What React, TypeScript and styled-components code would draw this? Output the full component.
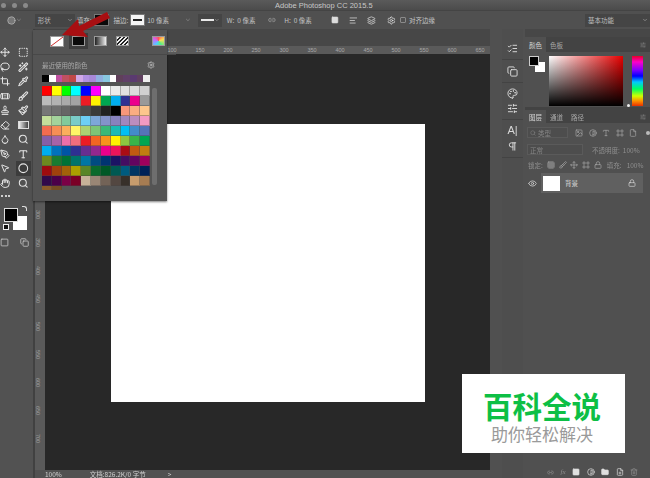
import React from "react";
import styled, { createGlobalStyle } from "styled-components";
import {
  Move, SquareDashed, Lasso, Wand2, Crop, Pipette, Bandage, Brush, Stamp, Paintbrush, Eraser,
  Droplet, Search, PenTool, Type, MousePointer2, Circle, Hand, Settings, ChevronDown, Link2,
  Square, AlignLeft, Layers, ListChecks, Copy, SlidersHorizontal, Image, Contrast, File, Lock,
  Grid3x3, Frame, Eye, Folder, FilePlus, Trash2, Pilcrow, Palette,
} from "lucide-react";

const Global = createGlobalStyle`
  html, body { margin: 0; padding: 0; background: #505050; overflow: hidden; }
  * { box-sizing: border-box; }
`;

const cjk = `"Noto Sans CJK SC", "Liberation Sans", sans-serif`;

const Stage = styled.div`
  position: relative;
  width: 650px;
  height: 478px;
  overflow: hidden;
  font-family: ${cjk};
  font-size: 6.5px;
  color: #c4c4c4;
`;
const Soft = styled.div`
  width: 650px;
  height: 478px;
  display: flex;
  flex-direction: column;
  filter: blur(0.55px);
`;
const TitleBar = styled.div`
  height: 10px;
  background: linear-gradient(#5a5a5a, #4b4b4b);
  display: flex;
  align-items: center;
  padding-left: 1px;
  padding-top: 1px;
`;
const WinDot = styled.span`
  width: 5px;
  height: 5px;
  border-radius: 50%;
  background: #8a8a8a;
`;
const WinDots = styled.div`
  display: flex;
  gap: 6px;
  width: 274px;
`;
const Title = styled.span`
  font-family: "Liberation Sans", sans-serif;
  font-size: 7.5px;
  color: #c8c8c8;
`;
const OptionsBar = styled.div`
  height: 19px;
  background: #505050;
  border-top: 1px solid #444;
  display: flex;
  align-items: center;
  padding-left: 7px;
  white-space: nowrap;
`;
const Gap = styled.span<{ $w: number }>`
  display: inline-block;
  flex: none;
  width: ${(p) => p.$w}px;
`;
const SelectBox = styled.div<{ $w: number }>`
  width: ${(p) => p.$w}px;
  height: 13px;
  flex: none;
  background: #454545;
  display: flex;
  align-items: center;
  justify-content: space-between;
  padding: 0 2px 0 3px;
  color: #bdbdbd;
`;
const OptSwatch = styled.div<{ $bg: string }>`
  width: 15px;
  height: 12px;
  flex: none;
  background: ${(p) => p.$bg};
  border: 1px solid #777;
  display: flex;
  align-items: center;
  justify-content: center;
`;
const LineDash = styled.span<{ $color: string; $w: number }>`
  display: block;
  width: ${(p) => p.$w}px;
  height: 1.5px;
  background: ${(p) => p.$color};
`;
const CheckBox = styled.span`
  width: 6px;
  height: 6px;
  flex: none;
  border: 1px solid #8a8a8a;
  border-radius: 1px;
`;
const Main = styled.div`
  flex: 1;
  min-height: 0;
  display: flex;
`;
const ToolBar = styled.div`
  width: 33px;
  flex: none;
  background: #525252;
  padding-top: 16px;
`;
const ToolGrid = styled.div`
  display: grid;
  grid-template-columns: 10px 15px;
  column-gap: 6px;
  grid-auto-rows: 14.5px;
`;
const ToolCell = styled.div<{ $on?: boolean }>`
  display: flex;
  align-items: center;
  justify-content: center;
  color: #e4e4e4;
  background: ${(p) => (p.$on ? "#3c3c3c" : "transparent")};
`;
const GradientTool = styled.div`
  width: 11px;
  height: 8px;
  border: 1px solid #ddd;
  background: linear-gradient(to right, #eee, #444);
`;
const ToolDots = styled.div`
  display: flex;
  gap: 1.5px;
  padding: 5px 0 0 1px;
  height: 16px;
`;
const ToolDot = styled.span`
  width: 2px;
  height: 2px;
  background: #cfcfcf;
`;
const ColorPair = styled.div`
  position: relative;
  width: 26px;
  height: 24px;
  margin: 2px 0 0 4px;
  display: grid;
  grid-template-columns: 9px 14px;
  grid-template-rows: 8px 14px;
`;
const FgColor = styled.div`
  grid-column: 1 / 3;
  grid-row: 1 / 3;
  width: 14px;
  height: 14px;
  background: #000;
  border: 1px solid #ddd;
  z-index: 1;
`;
const BgColor = styled.div`
  grid-column: 2;
  grid-row: 2;
  width: 14px;
  height: 14px;
  background: #fff;
`;
const DefaultMark = styled.span`
  position: absolute;
  left: -1px;
  top: 16px;
  width: 6px;
  height: 6px;
  background: #111;
  border: 1.5px solid #eee;
`;
const SwapMark = styled.span`
  position: absolute;
  left: 18px;
  top: -2px;
  width: 5px;
  height: 5px;
  border-top: 1.5px solid #ddd;
  border-right: 1.5px solid #ddd;
  border-radius: 0 3px 0 0;
`;
const QuickRow = styled.div`
  display: flex;
  justify-content: space-between;
  padding: 6px 4px 0 0;
  color: #cfcfcf;
`;
const Divider = styled.div`
  width: 2px;
  flex: none;
  background: #414141;
`;
const Workspace = styled.div`
  width: 455px;
  flex: none;
  display: flex;
  flex-direction: column;
  background: #474747;
`;
const TabStrip = styled.div`
  height: 17px;
  flex: none;
  background: #474747;
`;
const RulerH = styled.div`
  height: 8px;
  flex: none;
  background: #5a5a5a;
  display: flex;
  align-items: center;
  padding-left: 123px;
  overflow: hidden;
`;
const RulerLabel = styled.span`
  width: 28px;
  flex: none;
  text-align: center;
  font-family: "Liberation Sans", sans-serif;
  font-size: 5.5px;
  color: #a8a8a8;
`;
const WorkBody = styled.div`
  flex: 1;
  min-height: 0;
  display: flex;
`;
const RulerV = styled.div`
  width: 10px;
  flex: none;
  background: #5a5a5a;
  padding-top: 7px;
  overflow: hidden;
`;
const RulerVLabel = styled.div`
  height: 28px;
  writing-mode: vertical-rl;
  text-align: center;
  font-family: "Liberation Sans", sans-serif;
  font-size: 5.5px;
  color: #a0a0a0;
`;
const Canvas = styled.div`
  flex: 1;
  background: #282828;
  padding: 70px 0 0 66px;
`;
const Doc = styled.div`
  width: 314px;
  height: 278px;
  background: #fff;
`;
const StatusBar = styled.div`
  height: 8px;
  flex: none;
  background: #515151;
  display: flex;
  align-items: center;
  padding-left: 10px;
  color: #d0d0d0;
  font-size: 6.5px;
  line-height: 8px;
`;
const Dock = styled.div`
  width: 21px;
  flex: none;
  margin-left: 12px;
  background: #4e4e4e;
  padding-top: 8px;
  display: flex;
  flex-direction: column;
`;
const DockGroup = styled.div<{ $h: number }>`
  height: ${(p) => p.$h}px;
  border-bottom: 1px solid #434343;
  display: flex;
  flex-direction: column;
  align-items: center;
  justify-content: space-evenly;
  color: #e0e0e0;
`;
const DockGlyph = styled.span`
  font-family: "Liberation Sans", sans-serif;
  font-size: 11px;
  line-height: 11px;
  color: #d8d8d8;
`;
const Panels = styled.div`
  width: 125px;
  flex: none;
  margin-left: 2px;
  display: flex;
  flex-direction: column;
  background: #505050;
`;
const PanelGrip = styled.div`
  height: 8px;
  flex: none;
  background: #474747;
`;
const TabBar = styled.div<{ $h: number }>`
  height: ${(p) => p.$h}px;
  flex: none;
  background: #434343;
  display: flex;
  align-items: stretch;
  justify-content: flex-start;
  padding-right: 4px;
`;
const Tab = styled.div<{ $on?: boolean }>`
  width: 21px;
  display: flex;
  align-items: center;
  justify-content: center;
  background: ${(p) => (p.$on ? "#505050" : "transparent")};
  color: ${(p) => (p.$on ? "#d8d8d8" : "#a8a8a8")};
`;
const TabMenu = styled.div`
  margin-left: auto;
  display: flex;
  align-items: center;
  color: #888;
`;
const ColorBody = styled.div`
  height: 58px;
  flex: none;
  display: flex;
  padding: 4px 7px 0 4px;
  border-bottom: 3px solid #434343;
`;
const MiniPair = styled.div`
  width: 20px;
  height: 20px;
  flex: none;
  display: grid;
  grid-template-columns: 6px 10px;
  grid-template-rows: 6px 10px;
`;
const MiniFg = styled.div`
  grid-column: 1 / 3;
  grid-row: 1 / 3;
  width: 10px;
  height: 10px;
  background: #000;
  border: 1px solid #ccc;
  z-index: 1;
`;
const MiniBg = styled.div`
  grid-column: 2;
  grid-row: 2;
  width: 10px;
  height: 10px;
  background: #fff;
`;
const ColorField = styled.div`
  width: 74px;
  height: 50px;
  flex: none;
  background: linear-gradient(to top, #000, transparent), linear-gradient(to right, #fff, #e60000);
`;
const HueBar = styled.div`
  position: relative;
  width: 11px;
  height: 50px;
  flex: none;
  margin-left: 9px;
  background: linear-gradient(#e8002a, #ff00c8 12%, #8000ff 28%, #0000ff 40%, #00c8ff 52%, #00ff60 66%, #d0ff00 80%, #ff9000 90%, #e83000);
`;
const HueMark = styled.span`
  position: absolute;
  left: -5px;
  bottom: -1px;
  width: 3px;
  height: 3px;
  border-radius: 50%;
  background: #eee;
`;
const LayerBody = styled.div`
  flex: 1;
  min-height: 0;
  display: flex;
  flex-direction: column;
`;
const LayerRowBar = styled.div<{ $h: number }>`
  height: ${(p) => p.$h}px;
  flex: none;
  display: flex;
  align-items: center;
  padding-left: 2px;
  color: #8f8f8f;
  white-space: nowrap;
`;
const FieldBox = styled.div<{ $w: number }>`
  width: ${(p) => p.$w}px;
  height: 11px;
  flex: none;
  border: 1px solid #5a5a5a;
  background: #4d4d4d;
  display: flex;
  align-items: center;
  gap: 2px;
  padding-left: 2px;
  color: #858585;
`;
const LayerIcons = styled.div<{ $w: number }>`
  display: flex;
  align-items: center;
  width: ${(p) => p.$w}px;
  flex: none;
  justify-content: space-between;
  color: #a8a8a8;
`;
const ToggleDot = styled.span`
  width: 4px;
  height: 4px;
  border-radius: 50%;
  background: #bbb;
  flex: none;
`;
const LayerItem = styled.div`
  height: 20px;
  flex: none;
  margin-top: 1px;
  display: flex;
  align-items: center;
  padding-left: 3px;
  color: #d8d8d8;
`;
const LayerCard = styled.div`
  width: 102px;
  height: 20px;
  margin-left: 4px;
  background: #606060;
  display: flex;
  align-items: center;
  padding: 0 7px 0 2px;
`;
const Thumb = styled.div`
  width: 17px;
  height: 15px;
  background: #fff;
  flex: none;
`;
const LayerName = styled.span`
  margin-left: 5px;
  flex: 1;
`;
const LayerFoot = styled.div`
  margin-top: auto;
  height: 12px;
  flex: none;
  display: flex;
  align-items: center;
  justify-content: flex-end;
  gap: 6.5px;
  padding-right: 12px;
  color: #e0e0e0;
`;
const FootText = styled.span`
  font-family: "Liberation Serif", serif;
  font-style: italic;
  font-size: 7px;
  color: #8f8f8f;
`;
const Popup = styled.div`
  position: absolute;
  left: 33px;
  top: 30px;
  width: 134px;
  height: 171px;
  background: #545454;
  box-shadow: 0 1px 2px rgba(0, 0, 0, 0.5);
  padding: 3px 0 0 9px;
  filter: blur(0.5px);
`;
const FillRow = styled.div`
  height: 22px;
  display: flex;
  align-items: flex-start;
  border-bottom: 1px solid #484848;
  margin: 0 -9px;
  padding-left: 14px;
`;
const FillChoice = styled.div<{ $on?: boolean; $ml?: number }>`
  width: 19px;
  height: 16px;
  margin-left: ${(p) => p.$ml ?? 3}px;
  flex: none;
  display: flex;
  align-items: center;
  justify-content: center;
  background: ${(p) => (p.$on ? "#3d3d3d" : "transparent")};
`;
const FillIcon = styled.div<{ $bg: string }>`
  width: 13px;
  height: 10px;
  background: ${(p) => p.$bg};
  border: 1px solid #999;
`;
const RecentHead = styled.div`
  height: 20px;
  display: flex;
  align-items: center;
  justify-content: space-between;
  padding: 0 12px 0 0;
  color: #aaa;
  font-size: 6.5px;
`;
const RecentRow = styled.div`
  display: flex;
  height: 7px;
  width: 108px;
`;
const Swatch = styled.div<{ $c: string }>`
  flex: 1;
  background: ${(p) => p.$c};
`;
const SwatchArea = styled.div`
  display: flex;
  margin-top: 4px;
  gap: 2px;
`;
const SwatchClip = styled.div`
  width: 108px;
  height: 104px;
  overflow: hidden;
  display: grid;
  grid-template-columns: repeat(11, 1fr);
  grid-auto-rows: 10px;
`;
const SwatchCell = styled.div<{ $c: string }>`
  background: ${(p) => p.$c};
  border-right: 1px solid rgba(70, 70, 70, 0.4);
  border-bottom: 1px solid rgba(70, 70, 70, 0.4);
`;
const Scroll = styled.div`
  width: 5px;
  height: 97px;
  margin-top: 2px;
  background: #6e6e6e;
  border-radius: 2px;
`;
const Arrow = styled.svg`
  position: absolute;
  left: 55px;
  top: 8px;
  width: 60px;
  height: 34px;
  filter: blur(0.4px);
`;
const Watermark = styled.div`
  position: absolute;
  left: 462px;
  top: 374px;
  width: 163px;
  height: 79px;
  background: #fff;
  display: flex;
  flex-direction: column;
  align-items: center;
  padding: 13px 3px 0 0;
`;
const WmTitle = styled.div`
  font-family: ${cjk};
  font-size: 29.5px;
  line-height: 36px;
  font-weight: 700;
  color: #0dbf45;
`;
const WmSub = styled.div`
  font-family: ${cjk};
  font-size: 17px;
  line-height: 20px;
  margin-top: 1px;
  color: #9a9a9a;
`;

const rows = [
  ["#f00","#ff0","#0f0","#0ff","#00f","#f0f","#fff","#ebebeb","#e0e0e0","#dcdcdc","#d0d0d0"],
  ["#bbb","#b3b3b3","#aaa","#a3a3a3","#ed1c24","#fff200","#00a651","#00aeef","#2e3192","#ec008c","#999"],
  ["#777","#707070","#666","#5a5a5a","#4d4d4d","#3a3a3a","#222","#000","#f7977a","#fbad82","#fdc68c"],
  ["#c4df9b","#a3d39c","#82ca9c","#7accc8","#6dcff6","#7da7d9","#8493ca","#8882be","#a187be","#bc8dbf","#f49ac2"],
  ["#f26c4f","#f68e55","#fbaf5c","#fff467","#acd372","#7cc576","#3bb878","#1abbb4","#00bff3","#438cca","#5574b9"],
  ["#855fa8","#a763a8","#ee6fa9","#f26d7d","#ed1c24","#f26522","#f7941d","#fff200","#8dc63f","#39b54a","#00a651"],
  ["#00aeef","#0072bc","#0054a6","#2e3192","#662d91","#92278f","#ec008c","#ed145b","#aa0c14","#c15a10","#c17d10"],
  ["#6d8a1f","#197b30","#007236","#00746b","#0076a3","#004b80","#003471","#1b1464","#440e62","#630460","#9e005d"],
  ["#9e0b0f","#a0410d","#a36209","#aba000","#598527","#0b6a2b","#005826","#005952","#005b7f","#003663","#002157"],
  ["#320a4a","#4b0049","#7b0046","#7a0026","#c7b299","#998675","#736357","#534741","#37302a","#c69c6d","#a67c52"],
  ["#8a5a2a","#754c24"],
].flat();

const recent = ["#000","#fff","#c050a0","#c05060","#c04848","#d0a8e8","#b090e0","#a888d8","#90b0e0","#88c8e0","#fff","#60405a","#604068","#5a3a70","#604060","#eee"];

const tools = [Move, SquareDashed, Lasso, Wand2, Crop, Pipette, Bandage, Brush, Stamp, Paintbrush, Eraser, null, Droplet, Search, PenTool, Type, MousePointer2, Circle, Hand, Search];
const hLabels = [100,150,200,250,300,350,400,450,500,550,600,650];
const vLabels = [50,100,150,200,250,300,350,400,450,500,550,600,650,700];

export default function App() {
  return (
    <Stage>
      <Global />
      <Soft>
        <TitleBar>
          <WinDots><WinDot /><WinDot /><WinDot /></WinDots>
          <Title>Adobe Photoshop CC 2015.5</Title>
        </TitleBar>
        <OptionsBar>
          <Circle size={9} color="#b8b8b8" fill="#777" />
          <ChevronDown size={6} color="#aaa" />
          <Gap $w={13} />
          <SelectBox $w={40}>形状<ChevronDown size={6} /></SelectBox>
          <Gap $w={2} />
          填充:
          <Gap $w={3} />
          <OptSwatch $bg="#0a0a0a" />
          <Gap $w={4} />
          描边:
          <Gap $w={2} />
          <OptSwatch $bg="#f4f4f4"><LineDash $color="#222" $w={9} /></OptSwatch>
          <Gap $w={2} />
          10 像素
          <Gap $w={16} />
          <ChevronDown size={6} color="#aaa" />
          <Gap $w={7} />
          <SelectBox $w={24}><LineDash $color="#e8e8e8" $w={14} /><ChevronDown size={6} /></SelectBox>
          <Gap $w={5} />
          W:
          <Gap $w={3} />
          0 像素
          <Gap $w={13} />
          <Link2 size={8} color="#aaa" />
          <Gap $w={8} />
          H:
          <Gap $w={3} />
          0 像素
          <Gap $w={19} />
          <Square size={8} color="#ddd" fill="#ddd" />
          <Gap $w={10} />
          <AlignLeft size={9} color="#ddd" />
          <Gap $w={10} />
          <Layers size={9} color="#ddd" />
          <Gap $w={11} />
          <Settings size={9} color="#e4e4e4" />
          <Gap $w={4} />
          <CheckBox />
          <Gap $w={3} />
          对齐边缘
          <Gap $w={150} />
          <SelectBox $w={65}>基本功能<ChevronDown size={6} /></SelectBox>
        </OptionsBar>
        <Main>
          <ToolBar>
            <ToolGrid>
              {tools.map((Icon, i) => (
                <ToolCell key={i} $on={i === 17}>
                  {Icon ? <Icon size={10.5} strokeWidth={2.4} /> : <GradientTool />}
                </ToolCell>
              ))}
            </ToolGrid>
            <ToolDots><ToolDot /><ToolDot /><ToolDot /></ToolDots>
            <ColorPair><FgColor /><BgColor /><DefaultMark /><SwapMark /></ColorPair>
            <QuickRow><Square size={9} /><Copy size={9} /></QuickRow>
          </ToolBar>
          <Divider />
          <Workspace>
            <TabStrip />
            <RulerH>
              {hLabels.map((n) => <RulerLabel key={n}>{n}</RulerLabel>)}
            </RulerH>
            <WorkBody>
              <RulerV>
                {vLabels.map((n) => <RulerVLabel key={n}>{n}</RulerVLabel>)}
              </RulerV>
              <Canvas><Doc /></Canvas>
            </WorkBody>
            <StatusBar>
              100%
              <Gap $w={28} />
              文档:826.2K/0 字节
              <Gap $w={22} />
              &gt;
            </StatusBar>
          </Workspace>
          <Dock>
            <DockGroup $h={23}><ListChecks size={11} /></DockGroup>
            <DockGroup $h={23}><Copy size={11} /></DockGroup>
            <DockGroup $h={37}><Palette size={11} /><SlidersHorizontal size={11} /></DockGroup>
            <DockGroup $h={38}><DockGlyph>A|</DockGlyph><Pilcrow size={11} /></DockGroup>
          </Dock>
          <Panels>
            <PanelGrip />
            <TabBar $h={15}>
              <Tab $on>颜色</Tab>
              <Tab>色板</Tab>
              <TabMenu><SlidersHorizontal size={6} /></TabMenu>
            </TabBar>
            <ColorBody>
              <MiniPair><MiniFg /><MiniBg /></MiniPair>
              <ColorField />
              <HueBar><HueMark /></HueBar>
            </ColorBody>
            <TabBar $h={13}>
              <Tab $on>图层</Tab>
              <Tab>通道</Tab>
              <Tab>路径</Tab>
              <TabMenu><SlidersHorizontal size={6} /></TabMenu>
            </TabBar>
            <LayerBody>
              <LayerRowBar $h={19}>
                <FieldBox $w={41}><Search size={6} />类型</FieldBox>
                <Gap $w={7} />
                <LayerIcons $w={62}>
                  <Image size={8} /><Contrast size={8} /><Type size={8} /><Frame size={8} /><File size={8} />
                </LayerIcons>
                <Gap $w={9} />
                <ToggleDot />
              </LayerRowBar>
              <LayerRowBar $h={15}>
                <FieldBox $w={56}>正常</FieldBox>
                <Gap $w={9} />
                不透明度:
                <Gap $w={3} />
                100%
              </LayerRowBar>
              <LayerRowBar $h={15}>
                <Gap $w={1} />
                锁定:
                <Gap $w={4} />
                <LayerIcons $w={55}>
                  <Grid3x3 size={8} /><Brush size={8} /><Move size={8} /><Frame size={8} /><Lock size={8} />
                </LayerIcons>
                <Gap $w={5} />
                填充:
                <Gap $w={5} />
                100%
              </LayerRowBar>
              <LayerItem>
                <Eye size={9} />
                <LayerCard>
                  <Thumb />
                  <LayerName>背景</LayerName>
                  <Lock size={8} />
                </LayerCard>
              </LayerItem>
              <LayerFoot>
                <Link2 size={7} color="#8f8f8f" />
                <FootText>fx</FootText>
                <Square size={8} fill="#e0e0e0" />
                <Contrast size={8} />
                <Folder size={8} fill="#e0e0e0" />
                <FilePlus size={8} />
                <Trash2 size={8} color="#8f8f8f" />
              </LayerFoot>
            </LayerBody>
          </Panels>
        </Main>
      </Soft>
      <Popup>
        <FillRow>
          <FillChoice $ml={0}>
            <svg width="14" height="11" viewBox="0 0 14 11">
              <rect x="0.5" y="0.5" width="13" height="10" fill="#fff" stroke="#999" />
              <line x1="1" y1="10" x2="13" y2="1" stroke="#d03030" strokeWidth="1" />
            </svg>
          </FillChoice>
          <FillChoice $on><FillIcon $bg="#0a0a0a" /></FillChoice>
          <FillChoice><FillIcon $bg="linear-gradient(to right,#222,#eee)" /></FillChoice>
          <FillChoice><FillIcon $bg="repeating-linear-gradient(135deg,#eee 0 1.5px,#222 1.5px 3px)" /></FillChoice>
          <FillChoice $ml={17}><FillIcon $bg="conic-gradient(#f55,#fd5,#5e8,#5cf,#c6f,#f55)" /></FillChoice>
        </FillRow>
        <RecentHead>最近使用的颜色<Settings size={8} color="#ccc" /></RecentHead>
        <RecentRow>
          {recent.map((c, i) => <Swatch key={i} $c={c} />)}
        </RecentRow>
        <SwatchArea>
          <SwatchClip>
            {rows.map((c, i) => <SwatchCell key={i} $c={c} />)}
          </SwatchClip>
          <Scroll />
        </SwatchArea>
      </Popup>
      <Arrow viewBox="0 0 60 34">
        <polygon points="7,27 23,11 24,18 52,4 55,10 28,23 33,29" fill="#a80f12" />
      </Arrow>
      <Watermark>
        <WmTitle>百科全说</WmTitle>
        <WmSub>助你轻松解决</WmSub>
      </Watermark>
    </Stage>
  );
}
